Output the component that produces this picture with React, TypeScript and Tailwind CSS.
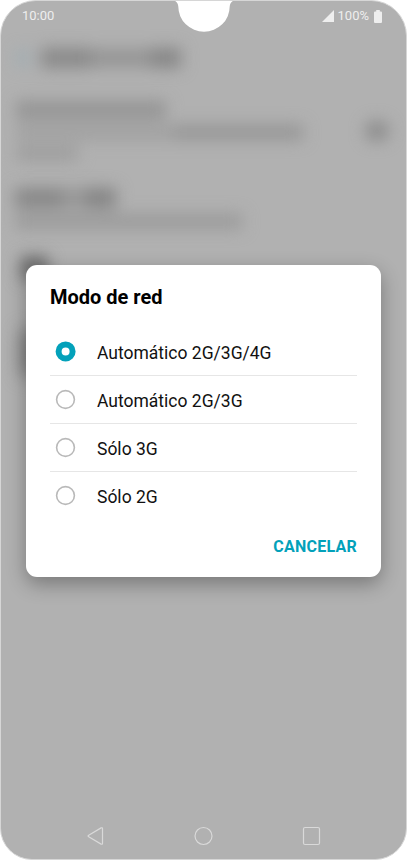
import { useState } from "react";

const options = ["Automático 2G/3G/4G", "Automático 2G/3G", "Sólo 3G", "Sólo 2G"];

function Notch() {
  return (
    <svg className="absolute left-[171px] top-[-1px]" width="64" height="34" viewBox="0 0 64 34">
      <path d="M0 0C4 .5 6 3 6.300 6.500A25.700 25.200 0 0 0 57.700 6.500C58 3 60 .5 64 0Z" fill="#fff" />
    </svg>
  );
}

function StatusBar() {
  return (
    <header className="flex h-[30px] items-center justify-between pl-[21px] pr-[24px] text-[13px] text-[#eeeeee]">
      <span>10:00</span>
      <div className="flex items-center">
        <svg width="12" height="12" viewBox="0 0 12 12" fill="currentColor">
          <path d="M12 0V12H0Z" />
        </svg>
        <span className="ml-1">100%</span>
        <svg className="ml-[5px]" width="8" height="13" viewBox="0 0 8 13" fill="currentColor">
          <path d="M2.200 0h3.600v1.500H7a1 1 0 0 1 1 1V12a1 1 0 0 1-1 1H1a1 1 0 0 1-1-1V2.500a1 1 0 0 1 1-1h1.200z" />
        </svg>
      </div>
    </header>
  );
}

// Out of focus settings list behind the dialog
function SettingsBackdrop() {
  return (
    <div className="flex-1" aria-hidden="true">
      <div className="flex h-[54px] items-center pl-4 blur-[8px]">
        <div className="h-4 w-3 bg-[#9fadb3]" />
        <div className="ml-3 h-[20px] w-[50px] bg-[#898989]" />
        <div className="h-[18px] w-[60px] bg-[#949494]" />
        <div className="h-[20px] w-[30px] bg-[#868686]" />
      </div>
      <div className="flex items-center justify-between pl-[15px] pr-[17px] pt-[16px] blur-[8px]">
        <div>
          <div className="h-[18px] w-[150px] bg-[#949494]" />
          <div className="mt-[6px] flex">
            <div className="h-[15px] w-[158px] bg-[#a0a0a0]" />
            <div className="h-[15px] w-[129px] bg-[#959595]" />
          </div>
          <div className="mt-[7px] h-[13px] w-[62px] bg-[#9b9b9b]" />
        </div>
        <div className="h-[20px] w-6 rounded-full bg-[#8b8b8b]" />
      </div>
      <div className="pl-[14px] pt-[28px] blur-[8px]">
        <div className="flex">
          <div className="h-[20px] w-[48px] bg-[#878787]" />
          <div className="h-[20px] w-[22px] bg-[#979797]" />
          <div className="h-[20px] w-[31px] bg-[#848484]" />
        </div>
        <div className="mt-[6px] h-[15px] w-[227px] bg-[#9a9a9a]" />
      </div>
      <div className="ml-[19px] mt-[27px] h-6 w-[28px] bg-[#6c6c6c] blur-[8px]" />
      <div className="ml-[19px] mt-[50px] h-[46px] w-[120px] bg-[#808080] blur-[9px]" />
    </div>
  );
}

function Radio({ checked }: { checked: boolean }) {
  return (
    <svg width="22" height="22" viewBox="0 0 22 22" fill="none">
      {checked ? (
        <circle cx="10.600" cy="10.400" r="7" stroke="#03a1ba" strokeWidth="6" />
      ) : (
        <circle cx="10.500" cy="10.500" r="8.900" stroke="#b9b9b9" strokeWidth="1.600" />
      )}
    </svg>
  );
}

function NetworkDialog() {
  const [selected, setSelected] = useState(0);

  return (
    <section
      role="dialog"
      className="absolute left-[25px] top-[264px] flex h-[312px] w-[355px] flex-col rounded-[11px] bg-white px-6 shadow-[0_7px_20px_0_rgba(0,0,0,0.32)]"
    >
      <h1 className="flex h-[63px] items-center text-[20px] font-bold text-black">Modo de red</h1>
      <ul className="divide-y divide-[#e6e6e6]">
        {options.map((label, i) => (
          <li key={label} className="h-12">
            <button
              role="radio"
              aria-checked={selected === i}
              onClick={() => setSelected(i)}
              className="flex h-full w-full items-center pl-[5px] text-left text-[17.5px] text-[#111111]"
            >
              <Radio checked={selected === i} />
              <span className="ml-5 pt-[2.5px]">{label}</span>
            </button>
          </li>
        ))}
      </ul>
      <div className="flex flex-1 items-start justify-end pt-[15px]">
        <button className="text-[16px] font-bold tracking-[0.25px] text-[#03a1ba]">CANCELAR</button>
      </div>
    </section>
  );
}

function NavBar() {
  return (
    <nav className="flex h-[46px] items-center justify-center gap-[88px] text-[#d9d9d9]">
      <svg width="20" height="20" viewBox="0 0 20 20" fill="none" stroke="currentColor" strokeWidth="1.200">
        <path d="M2.700 9.200 15.100 1.900q1.400-.6 1.400.9v14.400q0 1.500-1.400.9L2.700 10.800q-1.200-.8 0-1.600Z" />
      </svg>
      <svg width="20" height="20" viewBox="0 0 20 20" fill="none" stroke="currentColor" strokeWidth="1.200">
        <circle cx="9.500" cy="10" r="8.500" />
      </svg>
      <svg width="20" height="20" viewBox="0 0 20 20" fill="none" stroke="currentColor" strokeWidth="1.200">
        <rect x="1.500" y="1.500" width="16" height="17" rx="1.500" />
      </svg>
    </nav>
  );
}

export default function App() {
  return (
    <main className="h-[860px] w-[407px] bg-white font-['Roboto',sans-serif]">
      <div className="relative flex h-full w-full flex-col overflow-hidden rounded-t-[36px] rounded-b-[32px] border border-[#d6d6d6] bg-[#b1b1b1]">
        <StatusBar />
        <SettingsBackdrop />
        <NavBar />
        <Notch />
        <NetworkDialog />
      </div>
    </main>
  );
}
